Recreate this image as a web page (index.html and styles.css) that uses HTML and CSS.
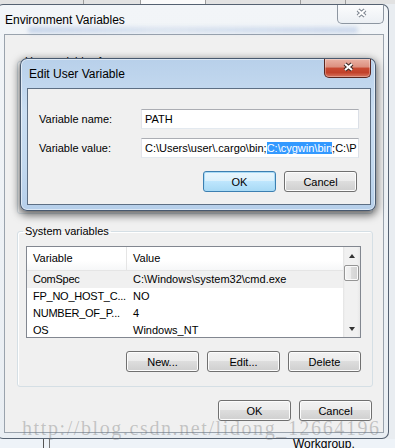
FILE: index.html
```html
<!DOCTYPE html>
<html lang="en">
<head>
<meta charset="utf-8">
<title>Environment Variables</title>
<link rel="stylesheet" href="styles.css">
</head>
<body>

<!-- strip of whatever sits behind the dialog -->
<div class="taskstrip">
 <span class="t1"></span><span class="t2"></span><span class="t3"></span><span class="t4"></span><span class="t5"></span><span class="t6"></span>
</div>

<div class="window env">
 <div class="titlebar">
  <span class="title">Environment Variables</span>
  <span class="glass-blur"></span>
  <span class="close inactive">
   <svg width="47" height="19" viewBox="0 0 47 19"><path class="xo" d="M21 5L28 11M28 5L21 11"/><path class="xi" d="M21 5L28 11M28 5L21 11"/></svg>
  </span>
 </div>
 <div class="client">
  <fieldset class="group user">
   <legend>User variables for user</legend>
  </fieldset>
  <fieldset class="group">
   <legend>System variables</legend>
   <div class="listview">
    <div class="lv-body">
     <div class="lv-head"><span class="c1">Variable</span><span class="c2">Value</span></div>
     <div class="lv-row sel"><span class="c1">ComSpec</span><span class="c2">C:\Windows\system32\cmd.exe</span></div>
     <div class="lv-row"><span class="c1">FP_NO_HOST_C...</span><span class="c2">NO</span></div>
     <div class="lv-row"><span class="c1">NUMBER_OF_P...</span><span class="c2">4</span></div>
     <div class="lv-row"><span class="c1">OS</span><span class="c2">Windows_NT</span></div>
    </div>
    <div class="vscroll">
     <span class="arrow up"></span>
     <span class="thumb"></span>
     <span class="track"></span>
     <span class="arrow down"></span>
    </div>
   </div>
   <div class="btn-row">
    <button class="btn">New...</button>
    <button class="btn">Edit...</button>
    <button class="btn">Delete</button>
   </div>
  </fieldset>
  <div class="btn-row dlg">
   <button class="btn">OK</button>
   <button class="btn">Cancel</button>
  </div>
 </div>
</div>

<div class="below">
 <span class="vline"></span><span class="vline second"></span>
 <span class="wg">Workgroup.</span>
</div>

<!-- the child dialog floats over the parent window -->
<div class="window edit">
 <div class="titlebar">
  <span class="title">Edit User Variable</span>
  <span class="close active">
   <svg width="47" height="19" viewBox="0 0 47 19"><path class="xo" d="M21 5L28 11M28 5L21 11"/><path class="xi" d="M21 5L28 11M28 5L21 11"/></svg>
  </span>
 </div>
 <div class="client">
  <div class="field">
   <label>Variable name:</label>
   <div class="textbox">PATH</div>
  </div>
  <div class="field">
   <label>Variable value:</label>
   <div class="textbox">C:\Users\user\.cargo\bin;<span class="selection">C:\cygwin\bin</span>;C:\P</div>
  </div>
  <div class="btn-row">
   <button class="btn default">OK</button>
   <button class="btn">Cancel</button>
  </div>
 </div>
</div>

<div class="watermark">http://blog.csdn.net/lidong_12664196</div>

</body>
</html>
```

FILE: styles.css
```css
/* ---------- Base ---------- */
*{box-sizing:border-box}
body{margin:0;width:395px;height:448px;overflow:hidden;position:relative;background:#e9edf1;font-family:"Liberation Sans",Arial,sans-serif;font-size:11px;color:#000}

/* ---------- Behind the window ---------- */
.taskstrip{display:flex;height:4px;background:#dcdcdc}
.taskstrip span{border-right:1px solid #9c9c9c;background:#e2e2e2}
.taskstrip .t1{width:84px}
.taskstrip .t2{width:57px}
.taskstrip .t3{width:65px;background:#fafafa}
.taskstrip .t4{width:95px}
.taskstrip .t5{width:45px}
.taskstrip .t6{flex:1;border-right:none}
.below{display:flex;height:9px;overflow:hidden;background:#eef3f8}
.vline{width:1px;margin-left:43px;background:#555}
.vline.second{margin-left:5px;background:#777}
.wg{margin-left:243px;margin-top:-2px;font-size:12px;line-height:14px}

/* ---------- Windows ---------- */
.window{border:1px solid rgba(35,50,70,.75);border-radius:7px}
.env{margin-left:-4px;width:393px;padding:0 4px 5px 7px;background:linear-gradient(#f2f5f8,#e9eef3)}
.edit{position:absolute;left:20px;top:58px;width:356px;height:153px;padding:0 4px 5px 6px;background:linear-gradient(#b8d0ea,#cadef2 35%,#c3d9ef 70%,#b6cfea);box-shadow:0 3px 9px 1px rgba(0,0,0,.6),inset 0 0 0 1px rgba(255,255,255,.5)}
.titlebar{display:flex;align-items:flex-start;height:29px;position:relative}
.title{padding-top:8px;font-size:12px;line-height:15px;white-space:nowrap;position:relative;z-index:1}
.env .title{padding-left:1px}
.edit .title{padding-left:2px}
.glass-blur{position:absolute;left:24px;top:22px;width:330px;height:6px;border-radius:3px;background:linear-gradient(90deg,rgba(60,110,190,.25),rgba(60,110,190,.12) 40%,rgba(60,110,190,.22));filter:blur(2px)}
.close{margin-left:auto;width:47px;height:19px;border:1px solid;border-top:none;border-radius:0 0 5px 5px;display:block;position:relative}
.close svg{position:absolute;left:-1px;top:0}
.close .xo{fill:none;stroke-width:4.2}
.close .xi{fill:none;stroke:#fff;stroke-width:2}
.close.inactive{border-color:#8d96a1;background:linear-gradient(rgba(255,255,255,.7),rgba(232,236,241,.6))}
.close.inactive .xo{stroke:#7d8590}
.close.active{border-color:#5b2620;background:linear-gradient(#eab2a4 0,#dc8f7e 45%,#c84a32 50%,#c2412a 75%,#d77560 100%);box-shadow:inset 0 0 0 1px rgba(255,255,255,.3)}
.close.active .xo{stroke:#3d2723}

/* ---------- Client areas ---------- */
.client{background:#f0f0f0;border:1px solid #9aa3ad}
.env .client{height:399px;padding:19px 10px 0 12px}
.edit .client{height:117px;border-color:#5d6f84;padding:20px 11px 0 11px}

/* ---------- Group boxes ---------- */
.group{margin:0;border:1px solid #d5dfe5;border-radius:3px;padding:7px 11px 14px 8px;box-shadow:inset 1px 1px #fff}
.group legend{margin-left:-3px;padding:0 2px;line-height:15px}
.group.user{height:160px}
.group + .group{margin-top:10px}

/* ---------- List view ---------- */
.listview{display:flex;height:92px;border:1px solid #828790;background:#fff}
.lv-body{flex:1;overflow:hidden}
.lv-head{display:flex;height:24px;border-bottom:1px solid #e5e5e5;background:linear-gradient(#fff 60%,#f6f7f8)}
.lv-head span{line-height:23px}
.lv-head .c1{border-right:1px solid #e5e5e5}
.c1{width:100px;flex:none;padding-left:6px;white-space:nowrap;overflow:hidden}
.c2{padding-left:6px;white-space:nowrap}
.lv-row{display:flex;height:17px;line-height:17px}
.lv-row .c1{letter-spacing:-.25px}
.lv-row.sel{background:#f0f0f0}
.vscroll{width:17px;display:flex;flex-direction:column;background:linear-gradient(90deg,#e3e3e3,#f1f1f1 2px,#f1f1f1 14px,#e8e8e8)}
.arrow{height:17px;display:flex;align-items:center;justify-content:center}
.arrow::before{content:"";border-left:3.5px solid transparent;border-right:3.5px solid transparent}
.arrow.up::before{border-bottom:4px solid #333}
.arrow.down::before{border-top:4px solid #333}
.thumb{height:16px;margin:1px 1px 0;border:1px solid #959595;border-radius:2px;background:linear-gradient(90deg,#f4f4f4,#ebebeb 50%,#dcdcdc 50%,#d2d2d2);box-shadow:inset 0 0 0 1px #fafafa}
.track{flex:1}

/* ---------- Buttons ---------- */
.btn-row{display:flex;justify-content:flex-end;gap:8px}
.group .btn-row{margin-top:13px}
.btn-row.dlg{margin-top:13px;padding-right:1px}
.edit .btn-row{margin-top:13px;margin-right:2px}
.btn{width:73px;height:21px;padding:0;border:1px solid #707070;border-radius:3px;background:linear-gradient(#f2f2f2,#ebebeb 50%,#dddddd 50%,#cfcfcf);box-shadow:inset 0 0 0 1px #fcfcfc;font-family:"Liberation Sans",Arial,sans-serif;font-size:11px;color:#000}
.btn.default{border-color:#3c7fb1;background:linear-gradient(#eaf6fd,#d9f0fc 50%,#bee6fd 50%,#a7d9f5);box-shadow:inset 0 0 0 1px #a9dbf6}

/* ---------- Edit fields ---------- */
.field{display:grid;grid-template-columns:102px 1fr;align-items:center;height:20px}
.field + .field{margin-top:9px}
.textbox{height:20px;padding:0 3px;border:1px solid;border-color:#abadb3 #dbdfe6 #e3e9ef #e2e3ea;background:#fff;line-height:18px;white-space:nowrap;overflow:hidden}
.selection{background:#3399ff;color:#fff}

/* ---------- Watermark ---------- */
.watermark{position:absolute;left:22px;top:416px;font-family:"Liberation Serif",serif;font-size:20px;line-height:24px;letter-spacing:1.6px;color:rgba(120,120,120,.38);white-space:nowrap}
```
